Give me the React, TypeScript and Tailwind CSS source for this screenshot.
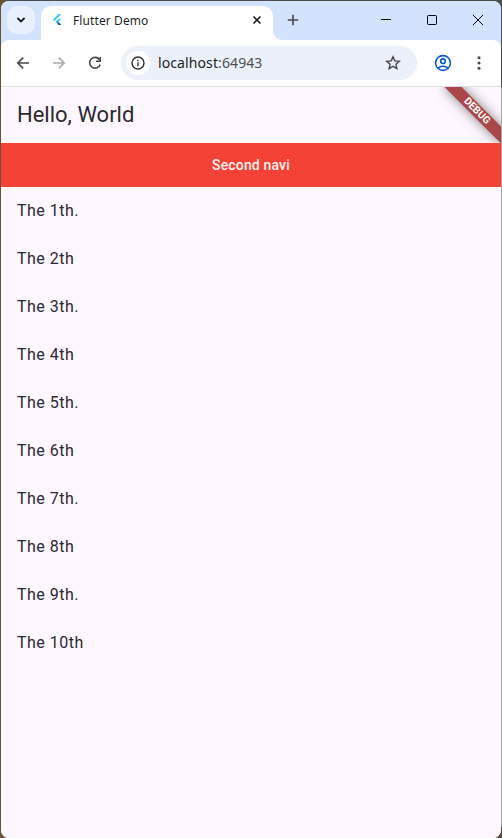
const ROWS = ["The 1th.", "The 2th", "The 3th.", "The 4th", "The 5th.", "The 6th", "The 7th.", "The 8th", "The 9th.", "The 10th"];

function FlutterLogo() {
  return (
    <svg className="ml-[11px] h-4 w-4 shrink-0" viewBox="0 0 16 16">
      <path d="M6.4 2H9.2L2.9 8.7L.5 7.9Z" fill="#42c6fb" />
      <path d="M6.3 7H9.2L6.5 9.9L4.4 9.2Z" fill="#42c6fb" />
      <path d="M3.8 10L5.2 8.5L6.9 10.2L5.4 11.8Z" fill="#1a9df0" />
      <path d="M5.4 11.8L6.9 10.2L9.3 12.9H6.6Z" fill="#08539c" />
    </svg>
  );
}

function TabStrip() {
  return (
    <div className="flex h-[39px] items-start bg-[#d3e3fd]">
      <div className="ml-1.5 mt-[5px] flex h-7 w-7 shrink-0 items-center justify-center rounded-[10px] bg-[#e9f0fe]">
        <svg width="10" height="8" viewBox="0 0 10 8" fill="none" stroke="#1f1f1f" strokeWidth="1.9"><path d="M1.4 2L5 5.5L8.6 2" /></svg>
      </div>
      <svg className="h-2 w-1.5 shrink-0 self-end" viewBox="0 0 6 8"><path d="M6 0V8H0C4 8 6 5 6 0Z" fill="#d3e3fd" /></svg>
      <div className="mt-[5px] flex h-[34px] w-[232px] shrink-0 rounded-t-[10px] bg-white">
        <div className="flex h-7 w-full items-center">
          <FlutterLogo />
          <span className="ml-[5px] w-[170px] whitespace-nowrap font-['Noto_Sans','Open_Sans',sans-serif] text-[12px] leading-4 tracking-[0.1px] text-[#1f1f1f]"><span className="relative top-px">Flutter Demo</span></span>
          <svg className="ml-[9px]" width="10" height="10" viewBox="0 0 10 10" stroke="#1f1f1f" strokeWidth="1.6"><path d="M1.5 1.5L8.5 8.5M8.5 1.5L1.5 8.5" /></svg>
        </div>
      </div>
      <svg className="h-2.5 w-2.5 shrink-0 self-end" viewBox="0 0 10 10"><path d="M0 0C0 6 4 10 10 10H0Z" fill="#fff" /></svg>
      <svg className="ml-1 mt-[13px] shrink-0" width="12" height="12" viewBox="0 0 12 12" stroke="#474747" strokeWidth="1.6"><path d="M6 .8V11.2M.8 6H11.2" /></svg>
      <div className="ml-auto mr-[18px] mt-3.5 flex gap-9">
        <svg width="10" height="10" viewBox="0 0 10 10" stroke="#000"><path d="M0 4.5H10" /></svg>
        <svg width="10" height="10" viewBox="0 0 10 10" fill="none" stroke="#000"><rect x=".5" y=".5" width="9" height="9" rx=".8" /></svg>
        <svg width="10" height="10" viewBox="0 0 10 10" stroke="#000"><path d="M0 0L10 10M10 0L0 10" /></svg>
      </div>
    </div>
  );
}

function Toolbar() {
  return (
    <div className="bg-[#d3e3fd]">
      <div className="flex h-[46px] items-center rounded-t-lg bg-white">
        <svg className="ml-3.5 shrink-0" width="16" height="16" viewBox="0 0 16 16" fill="none" stroke="#474747" strokeWidth="1.6"><path d="M14 8H3M8.2 2.6L2.8 8L8.2 13.4" /></svg>
        <svg className="ml-5 shrink-0" width="16" height="16" viewBox="0 0 16 16" fill="none" stroke="#aaa" strokeWidth="1.6"><path d="M2 8H13M7.8 2.6L13.2 8L7.8 13.4" /></svg>
        <svg className="ml-5 shrink-0" width="16" height="16" viewBox="0 0 16 16" fill="none" stroke="#474747" strokeWidth="1.6"><path d="M12.6 4.8A5.4 5.4 0 1 0 13.2 9.4" /><path d="M13.2 2V6.2H9" /></svg>
        <div className="ml-[18px] flex h-[34px] w-[296px] shrink-0 items-center rounded-full bg-[#ebf0fa]">
          <div className="ml-[5px] flex h-6 w-6 items-center justify-center rounded-full bg-white">
            <svg width="14" height="14" viewBox="0 0 14 14" fill="none" stroke="#303030" strokeWidth="1.4"><circle cx="7" cy="7" r="6" /><path d="M7 6.3V10.2M7 3.8V5.2" /></svg>
          </div>
          <span className="ml-2 w-[227px] whitespace-nowrap font-['Noto_Sans','Open_Sans',sans-serif] text-[14px] leading-5 tracking-[0.1px] text-[#1f1f1f]">localhost<span className="text-[#505050]">:64943</span></span>
          <svg className="shrink-0" width="16" height="16" viewBox="0 0 16 16" fill="none" stroke="#474747" strokeWidth="1.4"><path d="M8 1.8L9.8 5.9L14.3 6.3L10.9 9.2L11.9 13.6L8 11.3L4.1 13.6L5.1 9.2L1.7 6.3L6.2 5.9Z" /></svg>
        </div>
        <svg className="ml-[17px] shrink-0" width="18" height="18" viewBox="0 0 18 18" fill="none" stroke="#0b57d0" strokeWidth="1.6"><circle cx="9" cy="9" r="7.4" /><circle cx="9" cy="7.2" r="2.3" /><path d="M4 14.2C6.6 11.5 11.4 11.5 14 14.2" /></svg>
        <svg className="ml-[25px] shrink-0" width="4" height="14" viewBox="0 0 4 14" fill="#474747"><circle cx="2" cy="1.8" r="1.5" /><circle cx="2" cy="7" r="1.5" /><circle cx="2" cy="12.2" r="1.5" /></svg>
      </div>
    </div>
  );
}

export default function App() {
  return (
    <div className="h-[838px] w-[502px] bg-[linear-gradient(90deg,#675432_0px,#675432_4px,transparent_8px),linear-gradient(180deg,#4c4b4c_0px,#4c4b4c_86px,#a5a2a8_88px,#a5a2a8_825px,#504537_828px)] px-px pt-px font-['Roboto',sans-serif]">
      <div className="flex h-[837px] flex-col overflow-hidden rounded-lg bg-[#fef7ff]">
        <TabStrip />
        <Toolbar />
        <div className="h-px shrink-0 bg-[#dedfde]" />
        <main className="relative flex-1 overflow-hidden bg-[#fef7ff] text-[#2b292e]">
          <h1 className="flex h-14 items-center pl-4 text-[22px] font-normal leading-7">Hello, World</h1>
          <div className="flex h-11 items-center justify-center bg-[#f44336] text-[14px] font-medium leading-5 tracking-[0.15px] text-white/95">Second navi</div>
          <ul>
            {ROWS.map((row) => (
              <li key={row} className="flex h-12 items-center pl-4 text-[16px] leading-6 tracking-[0.5px]">{row}</li>
            ))}
          </ul>
          <div className="pointer-events-none absolute right-0 top-0 h-14 w-20 overflow-hidden">
            <div className="absolute -right-[16px] top-[18px] flex h-3 w-20 rotate-45 items-center justify-center bg-[#a94648] text-[10.2px] font-bold leading-none text-white shadow-[0_0_12px_rgba(0,0,0,0.5)]">DEBUG</div>
          </div>
        </main>
      </div>
    </div>
  );
}
